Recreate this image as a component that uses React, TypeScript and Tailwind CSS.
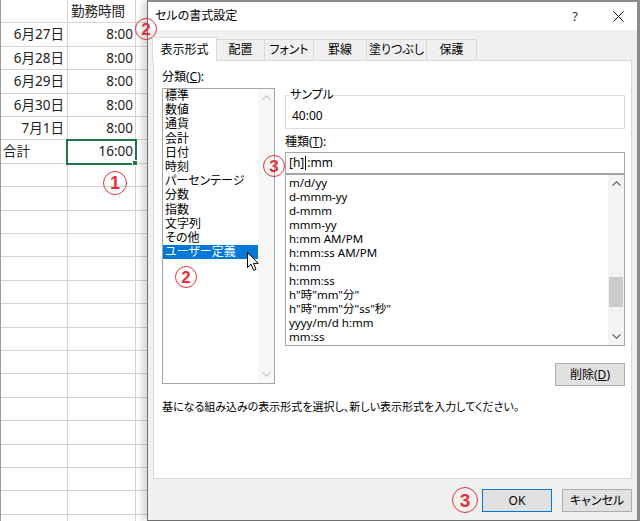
import React from "react";

type SheetRow = { a?: string; aLeft?: boolean; b?: string; bLeft?: boolean };

const sheetRows: SheetRow[] = [
  { b: "勤務時間", bLeft: true },
  { a: "6月27日", b: "8:00" },
  { a: "6月28日", b: "8:00" },
  { a: "6月29日", b: "8:00" },
  { a: "6月30日", b: "8:00" },
  { a: "7月1日", b: "8:00" },
  { a: "合計", aLeft: true, b: "16:00" },
];

const categories = [
  "標準",
  "数値",
  "通貨",
  "会計",
  "日付",
  "時刻",
  "パーセンテージ",
  "分数",
  "指数",
  "文字列",
  "その他",
  "ユーザー定義",
];

const formats = [
  "m/d/yy",
  "d-mmm-yy",
  "d-mmm",
  "mmm-yy",
  "h:mm AM/PM",
  "h:mm:ss AM/PM",
  "h:mm",
  "h:mm:ss",
  'h"時"mm"分"',
  'h"時"mm"分"ss"秒"',
  "yyyy/m/d h:mm",
  "mm:ss",
];

const tabs = [
  { label: "表示形式", w: "w-[65px]", active: true },
  { label: "配置", w: "w-[48px]" },
  { label: "フォント", w: "w-[49px]" },
  { label: "罫線", w: "w-[53px]" },
  { label: "塗りつぶし", w: "w-[60px]" },
  { label: "保護", w: "w-[50px]" },
];

function Chevron({ up, color }: { up?: boolean; color: string }) {
  return (
    <svg width="9" height="5" viewBox="0 0 9 5">
      <path
        d={up ? "M0.5 4.5 L4.5 0.8 L8.5 4.5" : "M0.5 0.5 L4.5 4.2 L8.5 0.5"}
        fill="none"
        stroke={color}
        strokeWidth="1.1"
      />
    </svg>
  );
}

function Circ({ n, className }: { n: string; className: string }) {
  return (
    <div
      className={`absolute rounded-full border-[1.5px] border-[#e0343a] text-[#e0343a] font-bold font-['Liberation_Sans',sans-serif] flex items-center justify-center leading-none ${className}`}
    >
      {n}
    </div>
  );
}

export default function App() {
  return (
    <div className="relative w-[640px] h-[521px] overflow-hidden bg-white text-black font-['Noto_Sans','Noto_Sans_CJK_JP',sans-serif] [font-feature-settings:'palt']">
      {/* spreadsheet */}
      <div className="flex flex-col border-l border-[#9a9a9a]">
        {Array.from({ length: 23 }, (_, i) => {
          const h = Math.round(23.4 * (i + 1)) - Math.round(23.4 * i);
          const r = sheetRows[i] || {};
          return (
            <div
              key={i}
              className={`flex shrink-0 border-b border-[#d4d4d4] ${h === 24 ? "h-[24px]" : "h-[23px]"}`}
            >
              <div
                className={`w-[67px] shrink-0 border-r border-[#d4d4d4] flex items-center text-[13.5px] text-[#222] ${
                  r.aLeft ? "justify-start pl-[2px]" : "justify-end pr-[3px]"
                }`}
              >
                {r.a}
              </div>
              <div
                className={`w-[68px] shrink-0 border-r border-[#d4d4d4] flex items-center text-[13.5px] text-[#222] ${
                  r.bLeft ? "justify-start pl-[3px]" : "justify-end pr-[2px]"
                }`}
              >
                {r.b}
              </div>
              <div className="flex-1" />
            </div>
          );
        })}
      </div>

      {/* selected cell */}
      <div className="absolute left-[66px] top-[139px] w-[71px] h-[26px] border-2 border-[#217346]" />
      <div className="absolute left-[132px] top-[160px] w-[6px] h-[6px] bg-[#217346] border border-white" />

      {/* dialog */}
      <div className="absolute left-[147px] top-0 w-[493px] h-[521px] flex flex-col bg-[#f0f0f0] border-l border-b border-[#6f6f6f] border-t-2 border-t-[#8c8c8c] border-r-[3px] border-r-[#8c8c8c] shadow-[-4px_0_8px_rgba(0,0,0,0.18)]">
        {/* title bar */}
        <div className="h-[28px] shrink-0 bg-white flex items-center">
          <span className="pl-[7px] text-[12px]">セルの書式設定</span>
          <span className="ml-auto mr-[9px] w-[30px] text-center text-[13px] leading-none text-[#333]">?</span>
          <span className="w-[38px] h-[28px] flex items-center justify-center">
            <svg width="11" height="11" viewBox="0 0 11 11">
              <path d="M0.5 0.5 L10.5 10.5 M10.5 0.5 L0.5 10.5" stroke="#111" strokeWidth="1" />
            </svg>
          </span>
        </div>

        {/* tabs */}
        <div className="h-[30px] shrink-0 flex items-end pl-[4px]">
          {tabs.map((t) =>
            t.active ? (
              <div
                key={t.label}
                className={`relative z-10 -mb-px h-[24px] ${t.w} bg-white border border-b-0 border-[#d9d9d9] flex items-center justify-center text-[12px]`}
              >
                {t.label}
              </div>
            ) : (
              <div
                key={t.label}
                className={`h-[21px] ${t.w} border-t border-r border-[#d9d9d9] bg-[#f0f0f0] flex items-center justify-center text-[12px]`}
              >
                {t.label}
              </div>
            )
          )}
        </div>

        {/* panel */}
        <div className="mx-[5px] h-[419px] shrink-0 bg-white border border-[#d9d9d9] pt-[8px] pl-[8px] pr-[6px] flex flex-col">
          <div className="flex items-start gap-[10px]">
            {/* left column */}
            <div className="w-[113px] shrink-0 flex flex-col">
              <div className="h-[16px] leading-[16px] text-[12px]">
                分類(<span className="underline">C</span>):
              </div>
              <div className="mt-[3px] h-[296px] border border-[#a5a5a5] flex">
                <div className="flex-1 text-[12px] leading-[14.2px]">
                  {categories.map((c, i) => (
                    <div
                      key={c}
                      className={i === 11 ? "bg-[#0078d7] text-white pl-[2px]" : "pl-[2px]"}
                    >
                      {c}
                    </div>
                  ))}
                </div>
                <div className="w-[16px] shrink-0 bg-[#f7f7f7] flex flex-col justify-between items-center py-[6px]">
                  <Chevron up color="#c6c6c6" />
                  <Chevron color="#c6c6c6" />
                </div>
              </div>
            </div>

            {/* right column */}
            <div className="flex-1 flex flex-col">
              <div className="relative mt-[26px] h-[34px] border border-[#dcdcdc] pl-[6px] pt-[13px] text-[12px] leading-[14px]">
                <span className="absolute left-[3px] -top-[9px] px-[1px] bg-white leading-[16px]">
                  サンプル
                </span>
                40:00
              </div>
              <div className="mt-[5px] h-[16px] leading-[16px] text-[12px]">
                種類(<span className="underline">T</span>):
              </div>
              <div className="mt-[2px] h-[22px] border border-[#a5a5a5] flex items-center pl-[3px] text-[12px]">
                [h]<span className="inline-block w-px h-[14px] bg-black mx-[1px]" />:mm
              </div>
              <div className="h-[172px] border border-[#a5a5a5] flex">
                <div className="flex-1 pt-[1px] pl-[3px] text-[11.5px] leading-[14px]">
                  {formats.map((f) => (
                    <div key={f}>{f}</div>
                  ))}
                </div>
                <div className="w-[16px] shrink-0 bg-[#f3f3f3] flex flex-col">
                  <div className="h-[17px] flex items-center justify-center">
                    <Chevron up color="#606060" />
                  </div>
                  <div className="flex-1 pt-[85px] px-[1px]">
                    <div className="h-[30px] bg-[#cdcdcd]" />
                  </div>
                  <div className="h-[17px] flex items-center justify-center">
                    <Chevron color="#606060" />
                  </div>
                </div>
              </div>
              <div className="mt-[17px] self-end w-[70px] h-[23px] bg-[#e1e1e1] border border-[#adadad] flex items-center justify-center text-[12px]">
                削除(<span className="underline">D</span>)
              </div>
            </div>
          </div>

          <div className="mt-[13px] text-[11px] leading-[16px]">
            基になる組み込みの表示形式を選択し、新しい表示形式を入力してください。
          </div>
        </div>

        {/* footer */}
        <div className="flex justify-end gap-[10px] pt-[10px] pr-[5px]">
          <div className="w-[70px] h-[23px] bg-[#e1e1e1] border border-[#0078d7] flex items-center justify-center text-[12px]">
            OK
          </div>
          <div className="w-[70px] h-[23px] bg-[#e1e1e1] border border-[#adadad] flex items-center justify-center text-[12px]">
            キャンセル
          </div>
        </div>
      </div>

      {/* mouse cursor */}
      <svg className="absolute left-[247px] top-[252px]" width="13" height="20" viewBox="0 0 13 20">
        <path
          d="M0.5 0.5 L0.5 15.5 L4 12.2 L6.6 18.3 L9 17.3 L6.5 11.4 L11.3 11.4 Z"
          fill="#fff"
          stroke="#000"
          strokeWidth="1"
          strokeLinejoin="round"
        />
      </svg>

      {/* annotations */}
      <Circ n="2" className="left-[135px] top-[18px] w-[22px] h-[22px] text-[17px]" />
      <Circ n="1" className="left-[103px] top-[171px] w-[24px] h-[24px] text-[18px]" />
      <Circ n="2" className="left-[175px] top-[266px] w-[22px] h-[22px] text-[17px]" />
      <Circ n="3" className="left-[263px] top-[155px] w-[22px] h-[22px] text-[17px]" />
      <Circ n="3" className="left-[452px] top-[487px] w-[26px] h-[26px] text-[19px]" />
    </div>
  );
}
